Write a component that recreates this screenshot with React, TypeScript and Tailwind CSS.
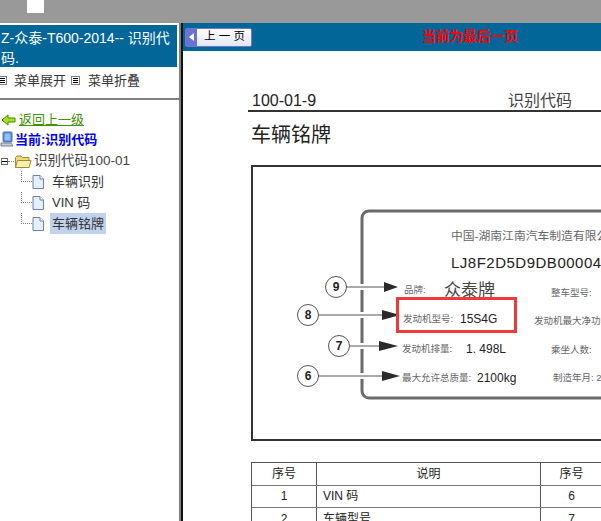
const cjk = "font-['Liberation_Sans','Noto_Sans_CJK_SC',sans-serif]";

const MenuIcon = () => (
  <svg width="9" height="9" viewBox="0 0 9 9" className="shrink-0">
    <rect x="0.5" y="0.5" width="8" height="8" fill="#fff" stroke="#808080" />
    <path d="M2 2.5h5M2 4.5h5M2 6.5h5" stroke="#000" strokeWidth="1" />
  </svg>
);

const BackArrow = () => (
  <svg width="15" height="12" viewBox="0 0 15 12" className="shrink-0">
    <path d="M1 6 L7 1 V4 H14 V8 H7 V11 Z" fill="#a8e020" stroke="#3f8a00" />
  </svg>
);

const Computer = () => (
  <svg width="14" height="17" viewBox="0 0 14 17" className="shrink-0">
    <rect x="3" y="1" width="9" height="10" rx="1" fill="#3f7fe0" stroke="#5a78b0" />
    <rect x="4.500" y="2.500" width="6" height="7" fill="#8fc4f8" />
    <path d="M1 12 H11 L13 15 H1 Z" fill="#c8cdd8" stroke="#7a8090" />
  </svg>
);

const Folder = () => (
  <svg width="18" height="15" viewBox="0 0 18 15" className="shrink-0">
    <path d="M1.500 13.500 V3.500 L3 2 H7 L8.500 3.500 H15 V13.500 Z" fill="#f3d774" stroke="#a08a40" />
    <path d="M1.500 13.500 L3.500 6.500 H17 L15 13.500 Z" fill="#fdeeaa" stroke="#a08a40" />
  </svg>
);

const FileIcon = () => (
  <svg width="12" height="14" viewBox="0 0 12 14" className="shrink-0">
    <path d="M1 0.500 H8 L11.500 4 V13.500 H1 Z" fill="#e4efff" stroke="#6f7fb0" />
    <path d="M8 0.500 V4 H11.500" fill="#fff" stroke="#6f7fb0" />
  </svg>
);

const TreeLeaf = ({ label, active }: { label: string; active?: boolean }) => (
  <div className="flex h-[21px] items-center">
    <div className="ml-[21px] w-[11px] self-stretch">
      <div className="h-[11px] w-full border-b border-l border-dotted border-[#808080]" />
    </div>
    <FileIcon />
    <span className={`ml-[6px] px-[2px] text-[13px] leading-[21px] text-[#333] ${active ? 'bg-[#c0d2ec]' : ''}`}>
      {label}
    </span>
  </div>
);

const Sidebar = () => (
  <aside className="w-[179px] shrink-0 bg-white">
    <div className="mt-[2px] mr-[2px] h-[42px] overflow-hidden bg-[#036699] pl-[1px] pt-[3px] text-[14px] leading-[20px] text-white">
      Z-众泰-T600-2014-- 识别代码.
    </div>
    <div className="flex h-[33px] items-center border-b-2 border-[#808080] pb-[4px] text-[13px] text-[#333]">
      <div className="ml-[-2px] flex items-center gap-[7px]">
        <MenuIcon />
        <span>菜单展开</span>
      </div>
      <div className="ml-[5px] flex items-center gap-[8px]">
        <MenuIcon />
        <span>菜单折叠</span>
      </div>
    </div>
    <div className="pt-[10px]">
      <div className="flex h-[19px] items-center gap-[3px] pl-[1px]">
        <BackArrow />
        <span className="text-[13px] text-[#3f9200] underline">返回上一级</span>
      </div>
      <div className="flex h-[21px] items-center gap-[1px] font-bold">
        <Computer />
        <span className="text-[13px] text-[#0000ee]">当前:识别代码</span>
      </div>
      <div className="flex h-[21px] items-center pt-[2px]">
        <div className="ml-[1px] flex h-[7px] w-[7px] items-center justify-center border border-[#666]">
          <div className="h-px w-[5px] bg-black" />
        </div>
        <div className="w-[6px] border-b border-dotted border-[#808080]" />
        <Folder />
        <span className="ml-[2px] text-[13.5px] text-[#444]">识别代码100-01</span>
      </div>
      <TreeLeaf label="车辆识别" />
      <TreeLeaf label="VIN 码" />
      <TreeLeaf label="车辆铭牌" active />
    </div>
  </aside>
);

const callouts = [
  { n: '9', cx: 336, cy: 287, tip: 398, base: 384 },
  { n: '8', cx: 308, cy: 315, tip: 400, base: 382 },
  { n: '7', cx: 339, cy: 346, tip: 398, base: 379 },
  { n: '6', cx: 308, cy: 376, tip: 400, base: 382 },
];

const Nameplate = () => (
  <svg viewBox="253 167 348 272" className="h-full w-full" fontFamily="'Liberation Sans','Noto Sans CJK SC',sans-serif">
    <rect x="362" y="211" width="300" height="187" rx="7" fill="#fff" stroke="#6a6a6a" strokeWidth="3" />
    <text x="451" y="240" fontSize="11.800" fill="#666">中国-湖南江南汽车制造有限公司</text>
    <text x="451" y="268" fontSize="15" letterSpacing="0.5" fill="#222">LJ8F2D5D9DB000044</text>
    <text x="404" y="293" fontSize="9.500" fill="#666">品牌:</text>
    <text x="444" y="296" fontSize="17" fill="#444">众泰牌</text>
    <text x="551" y="296" fontSize="9.500" fill="#666">整车型号:</text>
    <text x="403" y="322" fontSize="9.500" fill="#666">发动机型号:</text>
    <text x="460" y="323" fontSize="12" fill="#222">15S4G</text>
    <text x="534" y="324" fontSize="9.500" fill="#666">发动机最大净功率</text>
    <text x="402" y="352" fontSize="9.500" fill="#666">发动机排量:</text>
    <text x="466" y="353" fontSize="12" fill="#222">1. 498L</text>
    <text x="551" y="353" fontSize="9.500" fill="#666">乘坐人数:</text>
    <text x="402" y="381" fontSize="9.500" fill="#666">最大允许总质量:</text>
    <text x="477" y="382" fontSize="12" fill="#222">2100kg</text>
    <text x="553" y="381" fontSize="9.500" fill="#666">制造年月: 2</text>
    {callouts.map((c) => (
      <g key={c.n}>
        <line x1="362" y1={c.cy - 3} x2="362" y2={c.cy + 3} stroke="#fff" strokeWidth="4" />
        <line x1={c.cx + 10} y1={c.cy} x2={c.base} y2={c.cy} stroke="#555" strokeWidth="1" />
        <path d={`M${c.base} ${c.cy - 5} L${c.tip} ${c.cy} L${c.base} ${c.cy + 5} Z`} fill="#2a2a2a" />
        <circle cx={c.cx} cy={c.cy} r="10.500" fill="#fff" stroke="#555" strokeWidth="1" />
        <text x={c.cx} y={c.cy + 4} fontSize="12" fontWeight="bold" textAnchor="middle" fill="#222">{c.n}</text>
      </g>
    ))}
    <rect x="397.500" y="298.500" width="118" height="33" fill="none" stroke="#f03a3a" strokeWidth="3" />
  </svg>
);

const rows = [
  { a: '序号', b: '说明', c: '序号', head: true },
  { a: '1', b: 'VIN 码', c: '6' },
  { a: '2', b: '车辆型号', c: '7' },
];

const Content = () => (
  <main className="min-w-0 flex-1 bg-white">
    <div className="flex h-[28px] items-center bg-[#036699]">
      <button className="ml-[2px] flex h-[19px] w-[67px] items-center rounded-[2px] border border-[#7078c8] bg-gradient-to-b from-white to-[#e2e6fa] text-[11.500px] text-black">
        <span className="flex h-full w-[11px] items-center justify-center bg-[#6a72d8]">
          <span className="h-0 w-0 border-y-[4px] border-r-[5px] border-y-transparent border-r-white" />
        </span>
        <span className="ml-[7px]">上 一 页</span>
      </button>
      <div className="ml-[170px] text-[13.700px] font-bold text-[#ff0000]">当前为最后一页</div>
    </div>
    <div className="pl-[65px] pt-[39px]">
      <div className="flex h-[22px] items-end border-b-2 border-[#333] pl-[4px] text-[16px] leading-[18px] text-[#222]">
        <span className="w-[256px]">100-01-9</span>
        <span className="text-[#444]">识别代码</span>
      </div>
      <div className="mt-[10px] pl-[3px] text-[20px] leading-[27px] text-[#222]">车辆铭牌</div>
      <div className="ml-[3px] mt-[16px] h-[276px] w-[350px] border-y-2 border-l-2 border-[#333]">
        <Nameplate />
      </div>
      <div className="ml-[3px] mt-[21px] w-[350px] overflow-hidden border-l border-t border-[#555] text-[12px] text-[#222]">
        {rows.map((r) => (
          <div key={r.a} className="flex h-[22.500px] border-b border-[#777]">
            <div className="flex w-[65px] shrink-0 items-center justify-center border-r border-[#555]">{r.a}</div>
            <div className={`flex w-[224px] shrink-0 items-center border-r border-[#555] ${r.head ? 'justify-center' : 'pl-[6px]'}`}>{r.b}</div>
            <div className="flex w-[61px] shrink-0 items-center justify-center">{r.c}</div>
          </div>
        ))}
      </div>
    </div>
  </main>
);

export default function App() {
  return (
    <div className={`flex h-[521px] w-[601px] flex-col overflow-hidden bg-white ${cjk}`}>
      <div className="h-[23px] shrink-0 bg-[#999999]">
        <div className="ml-[27px] h-[13px] w-[17px] bg-white" />
      </div>
      <div className="flex min-h-0 flex-1">
        <Sidebar />
        <div className="w-[2px] shrink-0 bg-[#808080]" />
        <div className="w-[2px] shrink-0 bg-[#111]" />
        <Content />
      </div>
    </div>
  );
}
